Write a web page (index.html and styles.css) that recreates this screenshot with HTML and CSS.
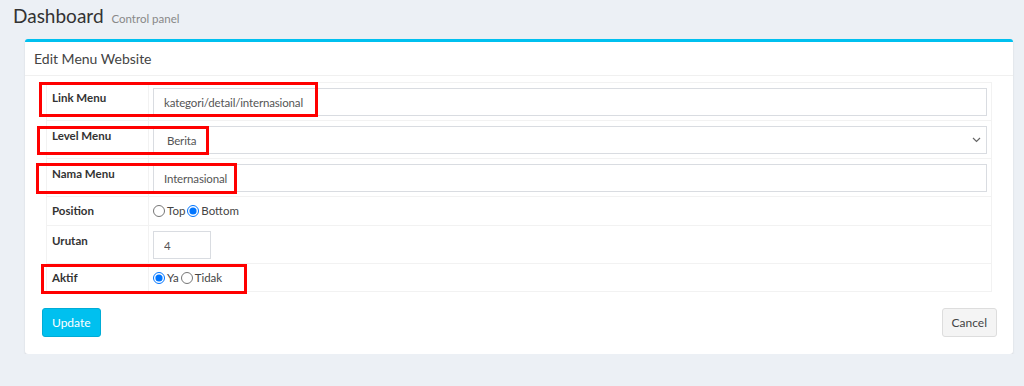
FILE: index.html
```html
<!DOCTYPE html>
<html lang="id">
<head>
  <meta charset="UTF-8">
  <meta name="viewport" content="width=device-width, initial-scale=1.0">
  <title>Dashboard - Edit Menu Website</title>
  <link rel="stylesheet" href="styles.css">
</head>
<body>

  <div class="content-header">
    <h1>Dashboard <small>Control panel</small></h1>
  </div>

  <div class="content">
    <div class="box box-info">
      <div class="box-header">
        <h3 class="box-title">Edit Menu Website</h3>
      </div>

      <form class="box-body">
        <div class="table-wrap">
          <table class="form-table">
            <tr>
              <th>Link Menu</th>
              <td><input type="text" class="form-control" value="kategori/detail/internasional"></td>
            </tr>
            <tr>
              <th>Level Menu</th>
              <td>
                <div class="select-wrap">
                  <select class="form-control select">
                    <option>Berita</option>
                  </select>
                  <svg class="chevron" width="9" height="6" viewBox="0 0 9 6"><path d="M1 1l3.5 3.5L8 1" fill="none" stroke="#666" stroke-width="1.2"/></svg>
                </div>
              </td>
            </tr>
            <tr>
              <th>Nama Menu</th>
              <td><input type="text" class="form-control" value="Internasional"></td>
            </tr>
            <tr class="short">
              <th>Position</th>
              <td>
                <div class="radio-group">
                  <label class="radio"><input type="radio" name="position"> Top</label>
                  <label class="radio"><input type="radio" name="position" checked> Bottom</label>
                </div>
              </td>
            </tr>
            <tr>
              <th>Urutan</th>
              <td><input type="text" class="form-control small-input" value="4"></td>
            </tr>
            <tr class="short last">
              <th>Aktif</th>
              <td>
                <div class="radio-group">
                  <label class="radio"><input type="radio" name="aktif" checked> Ya</label>
                  <label class="radio"><input type="radio" name="aktif"> Tidak</label>
                </div>
              </td>
            </tr>
          </table>

          <!-- annotation boxes -->
          <div class="mark mark-link"></div>
          <div class="mark mark-level"></div>
          <div class="mark mark-nama"></div>
          <div class="mark mark-aktif"></div>
        </div>

        <div class="box-footer">
          <button type="button" class="btn btn-info">Update</button>
          <button type="button" class="btn btn-default">Cancel</button>
        </div>
      </form>
    </div>
  </div>

</body>
</html>
```

FILE: styles.css
```css
/* Basic Styling */
body {
  margin: 0;
  background-color: #ecf0f5;
  font-family: Lato, "Open Sans", sans-serif;
  font-size: 12px;
  color: #333;
}

.content-header {
  padding: 4px 13px 0;
  height: 35px;
  box-sizing: border-box;
}

.content-header h1 {
  margin: 0;
  font-size: 19px;
  font-weight: 400;
  line-height: 24px;
  color: #333;
}

.content-header h1 small {
  font-size: 11.5px;
  color: #888;
  padding-left: 3px;
}

.content {
  padding: 4px 11px 0 25px;
}

.box {
  background-color: #fff;
  border-top: 3px solid #00c0ef;
  border-radius: 3px;
  box-shadow: 0 1px 2px rgba(0, 0, 0, 0.12);
}

.box-header {
  padding: 8px 9px;
  border-bottom: 1px solid #f0f0f0;
}

.box-title {
  margin: 0;
  font-size: 14px;
  font-weight: 400;
  line-height: 17px;
  color: #444;
}

.box-body {
  display: block;
  padding: 6px 16px 17px 17px;
}

.table-wrap {
  position: relative;
  margin: 0 5px 0 4px;
}

.form-table {
  width: 100%;
  border-collapse: collapse;
  border: 1px solid #f2f2f2;
}

.form-table tr {
  height: 38px;
}

.form-table tr.short {
  height: 29px;
}

.form-table tr.last {
  height: 28px;
}

.form-table th,
.form-table td {
  border-top: 1px solid #f2f2f2;
  padding: 5px 4px 3px;
  vertical-align: top;
  line-height: 19px;
}

.form-table th {
  width: 92px;
  padding-left: 5px;
  text-align: left;
  font-size: 11.5px;
  font-weight: 700;
  color: #333;
  border-right: 1px solid #f2f2f2;
}

.form-table tr.short th,
.form-table tr.short td {
  padding-top: 4px;
  padding-bottom: 3px;
}

.form-table tr.last th,
.form-table tr.last td {
  padding-bottom: 2px;
}

.form-control {
  display: block;
  box-sizing: border-box;
  width: 100%;
  height: 28px;
  padding: 4px 10px;
  border: 1px solid #d9dce1;
  border-radius: 0;
  background: #fff;
  font-family: inherit;
  font-size: 11.5px;
  letter-spacing: -0.15px;
  color: #555;
  outline: none;
}

.select-wrap {
  position: relative;
}

.select {
  appearance: none;
  -webkit-appearance: none;
  padding-left: 13px;
}

.chevron {
  position: absolute;
  right: 6px;
  top: 11px;
}

.small-input {
  width: 58px;
}

.radio-group {
  display: flex;
  align-items: center;
  height: 20px;
  gap: 2px;
}

.radio {
  display: flex;
  align-items: center;
  font-size: 11.5px;
  line-height: 20px;
  color: #444;
}

.radio input {
  width: 12px;
  height: 12px;
  margin: 0 2px 0 0;
}

/* red annotation boxes */
.mark {
  position: absolute;
  box-sizing: border-box;
  border: 3px solid #ff0000;
  pointer-events: none;
}

.mark-link {
  left: -7px;
  top: 0;
  width: 279px;
  height: 35px;
}

.mark-level {
  left: -9px;
  top: 44px;
  width: 172px;
  height: 29px;
}

.mark-nama {
  left: -10px;
  top: 81px;
  width: 201px;
  height: 31px;
}

.mark-aktif {
  left: -5px;
  top: 182px;
  width: 206px;
  height: 30px;
}

.box-footer {
  display: flex;
  justify-content: space-between;
  margin-top: 16px;
}

.btn {
  height: 29px;
  padding: 0 9px;
  border-radius: 3px;
  font-family: inherit;
  font-size: 12px;
  cursor: pointer;
}

.btn-info {
  background-color: #00c0ef;
  border: 1px solid #00acd6;
  color: #fff;
}

.btn-default {
  background-color: #f4f4f4;
  border: 1px solid #ddd;
  color: #444;
}
```
